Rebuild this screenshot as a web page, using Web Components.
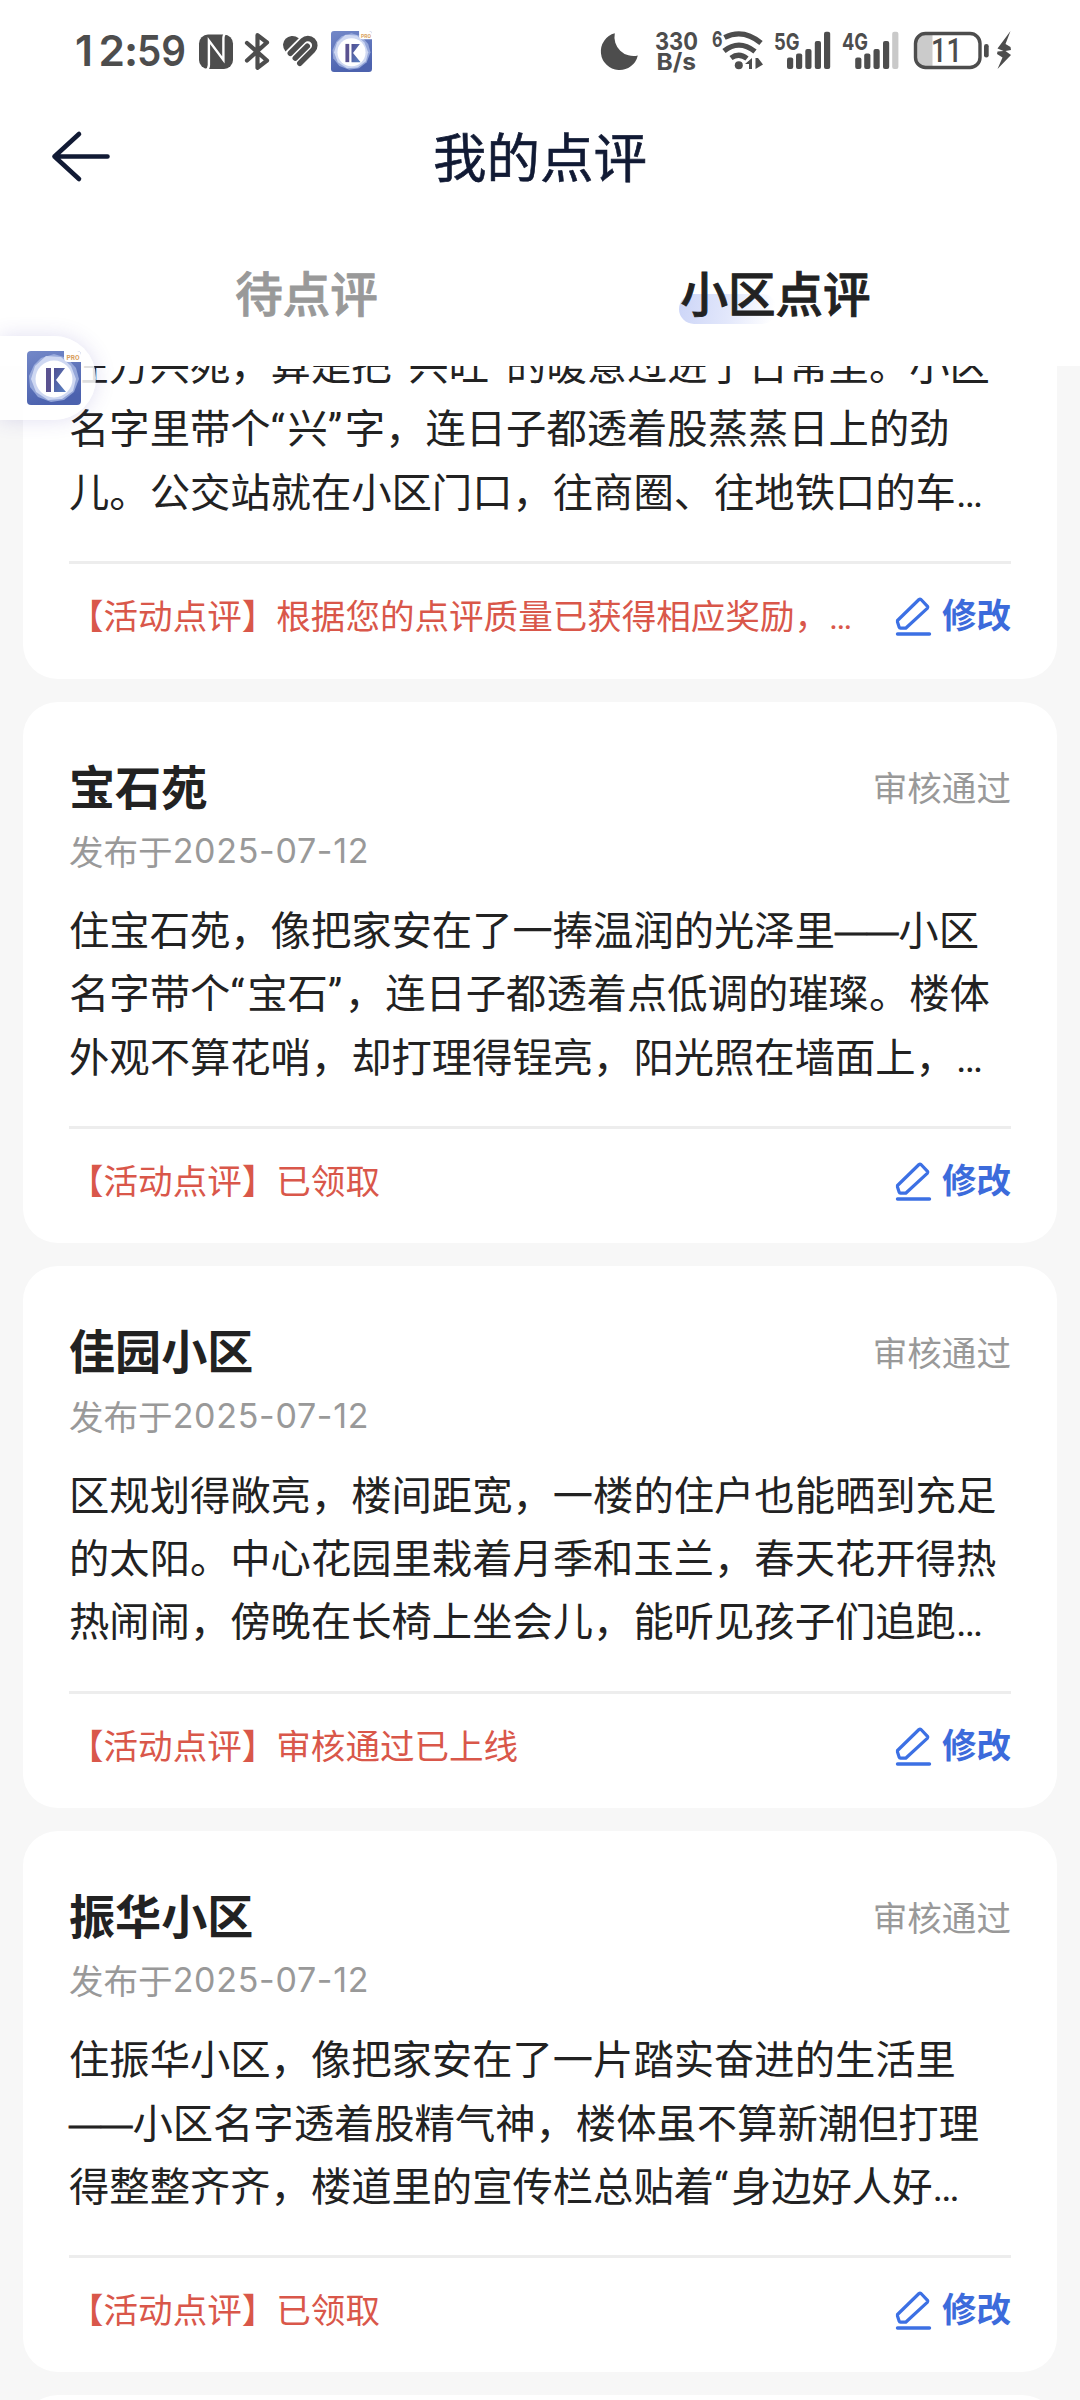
<!DOCTYPE html>
<html lang="zh-CN">
<head>
<meta charset="utf-8">
<title>我的点评</title>
<style>
html,body{margin:0;padding:0}
body{width:1080px;height:2400px;overflow:hidden;background:#f7f7f7;font-family:Roboto,"Noto Sans CJK SC",sans-serif;color:#222;text-spacing-trim:space-all}
</style>
</head>
<body>
<review-page></review-page>
<script>
const define = (name, html, setup) => customElements.define(name, class extends HTMLElement {
  constructor() {
    super();
    this.attachShadow({ mode: 'open' }).innerHTML = html;
  }
  connectedCallback() { if (setup) setup(this, this.shadowRoot); }
});

define('app-logo', `
<style>:host{display:block;width:54px;height:54px}svg{display:block;width:100%;height:100%}</style>
<svg viewBox="0 0 54 54">
  <defs><linearGradient id="g" x1="0" y1="0" x2=".3" y2="1"><stop offset="0" stop-color="#7388c8"/><stop offset="1" stop-color="#4c62ae"/></linearGradient>
  <linearGradient id="k" x1="0" y1="0" x2="1" y2="1"><stop offset="0" stop-color="#504f92"/><stop offset="1" stop-color="#5b83c4"/></linearGradient></defs>
  <rect width="54" height="54" rx="4" fill="url(#g)"/>
  <path d="M14 7L27 3l13 4 9 10 3 11-5 13-10 8-13 2-13-5L3 36 2 25l5-11z" fill="#a9b9e4" opacity=".75"/>
  <path d="M19 5l15 1 10 9 5 13-3 12-11 8-14 1-12-8-5-13 4-13z" fill="#dce4f7" opacity=".8"/>
  <circle cx="27" cy="28" r="18.500" fill="#fff"/>
  <rect x="19" y="17" width="5" height="24" fill="#5a5290"/>
  <path d="M27 17h11L29 29l10 12H27z" fill="url(#k)"/>
  <path d="M37 0h13a4 4 0 0 1 4 4v7H41a4 4 0 0 1-4-4z" fill="#fff"/>
  <text x="39.500" y="8.600" textLength="13" lengthAdjust="spacingAndGlyphs" font-family="Roboto,sans-serif" font-weight="700" font-size="8" fill="#d8a05c">PRO</text>
</svg>`);

define('status-bar', `
<style>
:host{display:flex;justify-content:space-between;align-items:flex-start;height:90px;padding:20px 40px 0 60px;box-sizing:border-box}
svg{display:block;flex:none} .left{display:flex} app-logo{width:41px;height:41px;margin:11px 0 0 1px}
text{font-family:Inter,sans-serif;fill:#4d4d4d}
</style>
<div class="left">
<svg width="270" height="70" viewBox="0 0 270 70" fill="#4d4d4d">
  <text x="15" y="46" font-size="42.500" font-weight="600" textLength="50" lengthAdjust="spacing">12</text>
  <text x="64" y="46" font-size="42.500" font-weight="700">:</text>
  <text x="77" y="46" font-size="42.500" font-weight="600" textLength="49" lengthAdjust="spacingAndGlyphs">59</text>
  <rect x="139" y="14.500" width="34" height="34.500" rx="9"/>
  <path d="M145.600 50.500Q148.900 49 148.900 45V20.500L163.400 40V18Q163.400 14 167 12.500" fill="none" stroke="#fff" stroke-width="2.400"/>
  <path d="M187 23l20 17.500-9.500 7.300V15.200l9.500 7.300L187 40.500" fill="none" stroke="#4d4d4d" stroke-width="4.200" stroke-linejoin="round" stroke-linecap="round"/>
  <path d="M225.500 31.500L238.800 18.200Q235.500 15.700 231.500 16Q224 17 223 24.500Q223 28.500 225.500 31.500z"/>
  <path d="M230.300 33.300L243 20.500A6.900 6.900 0 0 1 252.800 30.300L239.800 43.300M235.300 38.100L247.300 26.100" fill="none" stroke="#4d4d4d" stroke-width="5.500" stroke-linecap="round"/>
</svg><app-logo></app-logo>
</div>
<svg width="460" height="70" viewBox="0 0 460 70" fill="#4d4d4d">
  <path d="M34 13.300A18.700 18.700 0 1 0 57 35.500 19 19 0 0 1 34 13.300z" transform="translate(.8 0)"/>
  <text x="75" y="29.500" font-size="24.500" font-weight="700" textLength="43" lengthAdjust="spacingAndGlyphs">330</text>
  <text x="76.500" y="49.500" font-size="23.500" font-weight="700" textLength="39.500" lengthAdjust="spacingAndGlyphs">B/s</text>
  <text x="132" y="26.500" font-size="22" font-weight="700" textLength="10.500" lengthAdjust="spacingAndGlyphs">6</text>
  <g fill="none" stroke="#4d4d4d" stroke-width="5.200"><path d="M144.500 17.500Q163 8 181 23"/><path d="M144 31Q159 19 175 31.500"/><path d="M151 38Q159 32.300 167 38.500"/></g>
  <circle cx="158.800" cy="45.300" r="4"/>
  <path d="M165 44l7-6v11h-3v-5zM175.500 49V38h2.500l5 6.500z"/>
  <text x="194" y="29.500" font-size="23.500" font-weight="700" textLength="25.500" lengthAdjust="spacingAndGlyphs">5G</text>
  <g id="b"><rect x="207" y="37.500" width="6.200" height="11.500" rx="2"/><rect x="216" y="33.500" width="6.200" height="15.500" rx="2"/><rect x="225.300" y="29" width="6.200" height="20" rx="2"/><rect x="234.800" y="21" width="6.200" height="28" rx="2"/></g>
  <rect x="244" y="11.700" width="6.200" height="37.300" rx="2"/>
  <text x="262" y="29.500" font-size="23.500" font-weight="700" textLength="26" lengthAdjust="spacingAndGlyphs">4G</text>
  <use href="#b" x="68.200"/><rect x="312.200" y="11.700" width="6.200" height="37.300" rx="2" fill="#c9c9c9"/>
  <path d="M345 13.500h7.500v34H345q-9-1-9-10V23q0-8 9-9.500z" fill="#cbcbcb"/>
  <rect x="335.500" y="13.500" width="64.500" height="34" rx="10" fill="none" stroke="#4d4d4d" stroke-width="3.400"/>
  <text x="351" y="42.300" font-size="32.500" style="font-family:Roboto,sans-serif" font-weight="500" textLength="31" lengthAdjust="spacingAndGlyphs">11</text>
  <rect x="404" y="24" width="4.700" height="13.500" rx="2.300"/>
  <path d="M430.500 11L417.500 28.500l6 2.500-6 .5-.5 2.500 5.500 3.500-5 11.500L431 35l-5.500-4 5.500-1-.5-3-5-3z"/>
</svg>`);

define('nav-header', `
<style>
:host{display:grid;grid-template-columns:120px 1fr 120px;align-items:center;height:135px}
svg{display:block;margin-left:50px}
h1{margin:5px 0 0;text-align:center;font-weight:400;font-size:53.500px;line-height:80px;color:#111a34;-webkit-text-stroke:.6px #111a34}
</style>
<svg width="62" height="56" viewBox="0 0 62 56" fill="none" stroke="#111a34" stroke-width="4.600" stroke-linecap="round" stroke-linejoin="round"><path d="M57.500 26.500H4.500M29 4L4.500 26.500 29 49"/></svg>
<h1><slot></slot></h1>`);

define('tab-item', `
<style>
:host{flex:1;display:flex;justify-content:center;color:#999;font-size:47.500px;line-height:60px;font-weight:500;-webkit-text-stroke:.9px}
:host([active]){color:#222}
span{display:block;height:60px;padding-left:2px}
:host([active]) span{position:relative;isolation:isolate}
:host([active]) span::before{content:"";position:absolute;z-index:-1;left:0;top:28px;width:98px;height:30px;border-radius:15px;background:linear-gradient(100deg,#ccd5f7,#e2e7fb 50%,rgba(255,255,255,0) 95%)}
</style><span><slot></slot></span>`);

define('tab-row', `<style>:host{display:flex;height:100px;padding:0 71px}</style><slot></slot>`);

define('edit-action', `
<style>
:host{display:flex;align-items:center;gap:10px;color:#3c6bdb;font-size:34.560px;font-weight:700;line-height:52px;flex:none}
svg{display:block}
</style>
<svg width="37" height="40" viewBox="0 0 37 40" fill="none" stroke="#3c70e4" stroke-width="3.200" stroke-linejoin="round" stroke-linecap="round"><path d="M2.500 24.500L24 3.500q1-.8 2 0l6.500 6.800q.8 1 0 1.800L11.500 31.500q-.7.700-1.500.700H5.500q-1 0-1.300-1L2.500 26z"/><path d="M2.500 38h32" stroke-width="3.400"/></svg>
<span>修改</span>`);

define('review-card', `
<style>
:host{display:block;background:#fff;border-radius:34.560px;padding:56px 46px 0;overflow:hidden}
:host([continued]){padding-top:0;border-radius:0 0 34.560px 34.560px}
:host([continued]) .body{margin-top:-31px}
header{display:flex;justify-content:space-between;align-items:center;height:63.500px}
h2{margin:0;font-size:46.080px;font-weight:700;line-height:63px}
.state,time{font-size:34.560px;color:#999}
.state{padding-bottom:6px}
time{display:flex;align-items:center;height:58px;margin-bottom:21px}
.date{font-family:Inter,sans-serif;font-size:34px;letter-spacing:.700px;padding-top:1px}
.body{font-size:40.320px;line-height:63.360px}
footer{display:flex;justify-content:space-between;align-items:center;box-sizing:border-box;height:117px;margin-top:36px;border-top:3px solid #ededed;padding-bottom:10px}
:host([continued]) footer{height:117.500px}
.note{font-size:34.560px;color:#d9574a;white-space:nowrap;padding-bottom:4px}
</style>
<header><h2></h2><span class="state">审核通过</span></header>
<time><span>发布于</span><span class="date">2025-07-12</span></time>
<div class="body"><slot></slot></div>
<footer><span class="note"></span><edit-action></edit-action></footer>`, (el, root) => {
  root.querySelector('h2').textContent = el.getAttribute('name') || '';
  root.querySelector('.note').textContent = '【活动点评】' + el.getAttribute('note');
  if (el.hasAttribute('continued')) { root.querySelector('header').remove(); root.querySelector('time').remove(); }
});

define('text-line', `<style>
:host{display:block;height:63.360px;white-space:nowrap}
.q{letter-spacing:2.600px}
.d{display:inline-block;font-family:"Liberation Sans",sans-serif;font-size:31.700px;line-height:1;height:32px;vertical-align:3px;-webkit-text-stroke:.8px}
</style><span class="t"></span>`, (el, root) => {
  root.querySelector('.t').innerHTML = el.textContent
    .replace(/[“”]/g, q => `<span class="q">${q}</span>`)
    .replace(/——/g, d => `<span class="d">${d}</span>`);
});

define('float-app', `
<style>:host{position:absolute;left:0;top:336px;width:96px;height:84px;box-sizing:border-box;padding:15px 0 0 27px;background:rgba(255,255,255,.86);border-radius:0 42px 42px 0;box-shadow:0 0 20px rgba(70,60,170,.17)}</style>
<app-logo></app-logo>`);

define('review-page', `
<style>
:host{display:flex;flex-direction:column;width:1080px;height:2400px;overflow:hidden;position:relative}
.top{background:#fff;height:366px;flex:none;display:flex;flex-direction:column;justify-content:space-between}
main{flex:1;display:flex;flex-direction:column;gap:23.040px;padding:0 23.040px;overflow:hidden;min-height:0}
main>*{flex:none}
.next{height:60px;background:#fff;border-radius:34.560px 34.560px 0 0}
</style>
<div class="top">
  <div><status-bar></status-bar><nav-header>我的点评</nav-header></div>
  <tab-row><tab-item>待点评</tab-item><tab-item active>小区点评</tab-item></tab-row>
</div>
<main>
  <review-card continued note="根据您的点评质量已获得相应奖励，…">
    <text-line>在万兴苑，算是把“兴旺”的暖意过进了日常里。小区</text-line>
    <text-line>名字里带个“兴”字，连日子都透着股蒸蒸日上的劲</text-line>
    <text-line>儿。公交站就在小区门口，往商圈、往地铁口的车…</text-line>
  </review-card>
  <review-card name="宝石苑" note="已领取">
    <text-line>住宝石苑，像把家安在了一捧温润的光泽里——小区</text-line>
    <text-line>名字带个“宝石”，连日子都透着点低调的璀璨。楼体</text-line>
    <text-line>外观不算花哨，却打理得锃亮，阳光照在墙面上，…</text-line>
  </review-card>
  <review-card name="佳园小区" note="审核通过已上线">
    <text-line>区规划得敞亮，楼间距宽，一楼的住户也能晒到充足</text-line>
    <text-line>的太阳。中心花园里栽着月季和玉兰，春天花开得热</text-line>
    <text-line>热闹闹，傍晚在长椅上坐会儿，能听见孩子们追跑…</text-line>
  </review-card>
  <review-card name="振华小区" note="已领取">
    <text-line>住振华小区，像把家安在了一片踏实奋进的生活里</text-line>
    <text-line>——小区名字透着股精气神，楼体虽不算新潮但打理</text-line>
    <text-line>得整整齐齐，楼道里的宣传栏总贴着“身边好人好…</text-line>
  </review-card>
  <div class="next"></div>
</main>
<float-app></float-app>`);
</script>
</body>
</html>
